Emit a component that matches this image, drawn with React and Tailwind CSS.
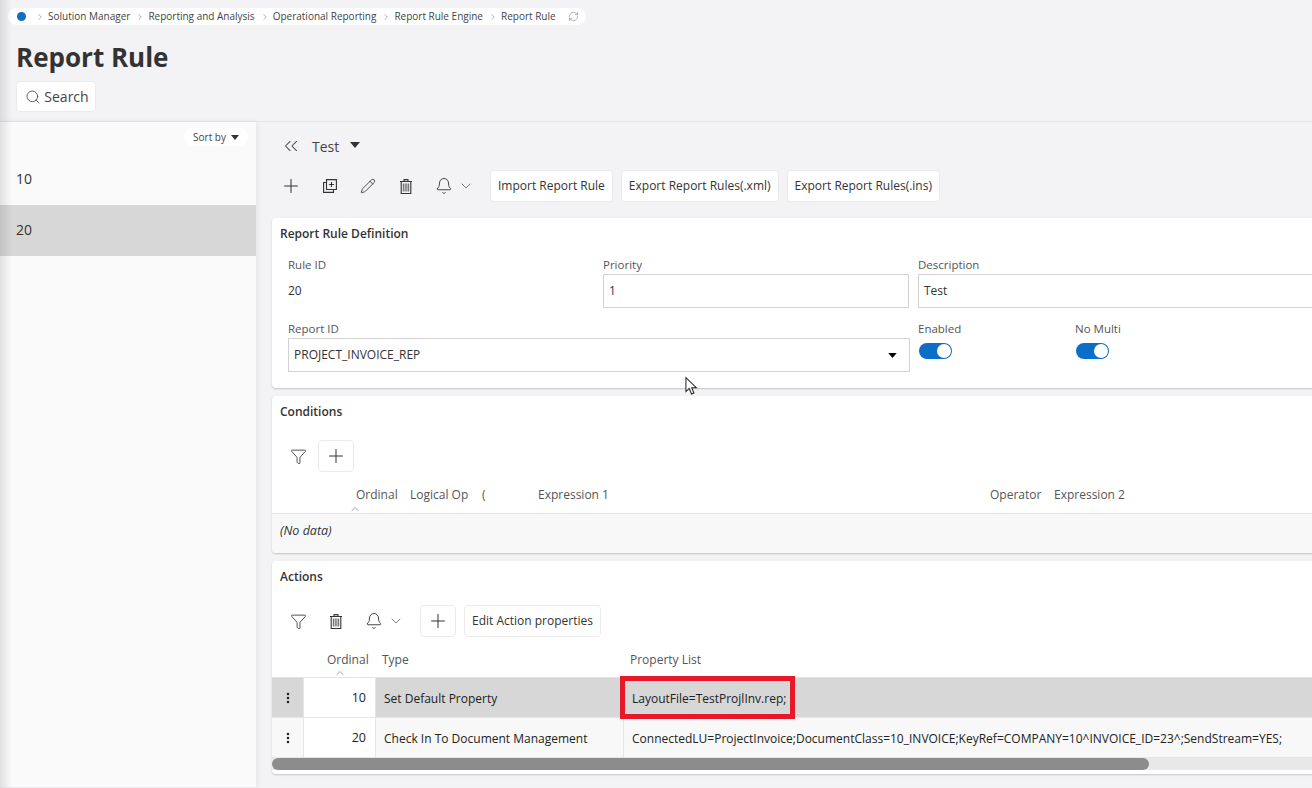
import { Search, RefreshCw, ChevronRight, ChevronDown, ChevronUp, ChevronsLeft, Plus, Pencil, Bell, Funnel, EllipsisVertical } from "lucide-react";

const crumbs = ["Solution Manager", "Reporting and Analysis", "Operational Reporting", "Report Rule Engine", "Report Rule"];

const Caret = ({ className }) => (
  <svg viewBox="0 0 10 6" className={className}>
    <path d="M0 0h10L5 6z" fill="currentColor" />
  </svg>
);

const Trash = () => (
  <svg viewBox="0 0 12 15" className="w-[12px] h-[15px] text-[#333]" fill="none" stroke="currentColor" strokeWidth="1.1">
    <path d="M0 2.5h12M4 2.5V.6h4v1.9" />
    <path d="M1.2 2.5h9.6v12H1.2z" />
    <path d="M3.4 4.5v8M5.2 4.5v8M6.9 4.5v8M8.6 4.5v8" stroke="#777" strokeWidth="1.2" />
  </svg>
);

const Duplicate = () => (
  <svg viewBox="0 0 14 14" className="w-[14px] h-[14px] text-[#333]" fill="none" stroke="currentColor" strokeWidth="1.1">
    <path d="M3.5.6h9.9v9.9H3.5z" />
    <path d="M3.5 3.5H.6v9.9h9.9v-2.9" />
    <path d="M8.45 3v5M5.95 5.5h5" />
  </svg>
);

const Cursor = () => (
  <svg viewBox="0 0 14 20" className="absolute left-[685px] top-[376px] w-[13px] h-[20px]">
    <path d="M1 1v15l3.6-3.4 2.4 6 2.6-1-2.4-5.8h5z" fill="#fff" stroke="#222" strokeWidth="1.1" />
  </svg>
);

const Toggle = () => (
  <div className="w-[33px] h-[16px] rounded-full bg-[#0b6fc9] flex items-center justify-end pr-[1px]">
    <div className="w-[14px] h-[14px] rounded-full bg-white" />
  </div>
);

const Field = ({ label, children, className }) => (
  <div className={className}>
    <div className="text-[11.5px] leading-[16px] text-[#555] -mt-[1px] mb-[1px]">{label}</div>
    {children}
  </div>
);

const BellMenu = () => (
  <div className="flex items-center gap-[5px]">
    <Bell className="w-[18px] h-[18px] text-[#333]" strokeWidth={1.2} />
    <ChevronDown className="w-[16px] h-[16px] text-[#555]" strokeWidth={1.1} />
  </div>
);

const Btn = ({ children, className = "" }) => (
  <button className={`h-[32px] px-[7px] bg-white rounded-[4px] border border-[#ebebeb] text-[12px] text-[#333] whitespace-nowrap ${className}`}>
    {children}
  </button>
);

const PlusBtn = ({ className = "" }) => (
  <div className={`w-[36px] h-[32px] border border-[#ebebeb] rounded-[4px] flex items-center justify-center ${className}`}>
    <Plus className="w-[22px] h-[22px] text-[#333]" strokeWidth={1.1} />
  </div>
);

const ActionRow = ({ num, type, selected, children }) => (
  <div className={`flex h-[40px] border-b border-[#e6e6e6] text-[12px] text-[#222] ${selected ? "bg-[#d7d7d7]" : "bg-[#f8f8f8]"}`}>
    <div className="w-[32px] flex items-center justify-center border-r border-[#e6e6e6]">
      <EllipsisVertical className="w-[14px] h-[14px] text-[#222]" strokeWidth={2.4} />
    </div>
    <div className="w-[72px] bg-white flex items-center justify-end pt-[2px] pr-[9px] border-r border-[#e6e6e6] text-[12.5px]">{num}</div>
    <div className="w-[248px] flex items-center pt-[2px] pl-[8px] border-r border-[#e6e6e6]">{type}</div>
    <div className="flex-1 flex items-center pt-[2px] pl-[8px] whitespace-nowrap">{children}</div>
  </div>
);

export default function App() {
  return (
    <div className="relative w-[1312px] h-[788px] overflow-hidden bg-[#f3f2f5] font-['Open_Sans',sans-serif]">
      <div className="h-[122px] border-b border-[#e3e3e3] pt-[8px] pl-[8px]">
        <div className="w-[578px] h-[17px] bg-white rounded-full flex items-center pl-[9px] text-[10px] text-[#444] whitespace-nowrap">
          <div className="w-[9px] h-[9px] shrink-0 rounded-full bg-[#0b6fc9] mr-[9px]" />
          {crumbs.map((c) => (
            <div key={c} className="flex items-center">
              <ChevronRight className="w-[10px] h-[10px] shrink-0 text-[#666] mr-[3px]" strokeWidth={1.2} />
              <span className="mr-[5px]">{c}</span>
            </div>
          ))}
          <RefreshCw className="w-[11px] h-[11px] shrink-0 text-[#777] ml-[7px]" strokeWidth={1.2} />
        </div>
        <h1 className="ml-[8px] mt-[12px] text-[26px] leading-[40px] font-bold text-[#333]">Report Rule</h1>
        <button className="ml-[8px] mt-[4px] w-[80px] h-[31px] bg-white rounded-[4px] border border-[#ebebeb] flex items-center justify-center gap-[3px] pl-[2px] text-[14px] text-[#444]">
          <Search className="w-[16px] h-[16px]" strokeWidth={1.3} />
          Search
        </button>
      </div>

      <div className="flex h-[665px]">
        <div className="w-[256px] shrink-0 bg-[#fafafa] shadow-[2px_0_6px_rgba(0,0,0,0.05)]">
          <div className="h-[32px] flex justify-end items-start pt-[6px] pr-[8px]">
            <div className="h-[18px] px-[9px] bg-white rounded-full flex items-center gap-[5px] text-[10px] text-[#444]">
              Sort by
              <Caret className="w-[8px] h-[5px] text-[#333]" />
            </div>
          </div>
          <div className="h-[51px] flex items-center pb-[2px] pl-[16px] text-[14px] text-[#333]">10</div>
          <div className="h-[51px] bg-[#d7d7d7] flex items-center pb-[2px] pl-[16px] text-[14px] text-[#333]">20</div>
        </div>

        <div className="flex-1 pl-[16px] min-w-0">
          <div className="h-[48px] flex items-center pl-[8px]">
            <ChevronsLeft className="w-[22px] h-[22px] text-[#444]" strokeWidth={1.1} />
            <span className="ml-[10px] text-[14px] text-[#444]">Test</span>
            <Caret className="ml-[10px] mb-[3px] w-[12px] h-[6px] text-[#333]" />
          </div>
          <div className="h-[32px] flex items-center">
            <Plus className="ml-[8px] w-[22px] h-[22px] text-[#333]" strokeWidth={1.1} />
            <div className="ml-[21px]"><Duplicate /></div>
            <Pencil className="ml-[23px] w-[16px] h-[16px] text-[#333]" strokeWidth={1.3} />
            <div className="ml-[24px]"><Trash /></div>
            <div className="ml-[23px]"><BellMenu /></div>
            <Btn className="ml-[16px]">Import Report Rule</Btn>
            <Btn className="ml-[8px]">Export Report Rules(.xml)</Btn>
            <Btn className="ml-[8px]">Export Report Rules(.ins)</Btn>
          </div>

          {/* Definition card */}
          <div className="mt-[16px] w-[1060px] h-[170px] bg-white rounded-[4px] shadow-[0_1px_2px_rgba(0,0,0,0.2)] pl-[8px] pt-[8px]">
            <div className="text-[12px] leading-[16px] font-semibold text-[#333]">Report Rule Definition</div>
            <div className="flex pl-[8px] mt-[16px]">
              <Field label="Rule ID" className="w-[315px]">
                <div className="h-[34px] flex items-center text-[12px] text-[#333]">20</div>
              </Field>
              <Field label="Priority" className="w-[315px]">
                <div className="w-[306px] h-[34px] border border-[#d2d2d2] flex items-center pl-[5px] text-[12px] text-[#333]">1</div>
              </Field>
              <Field label="Description" className="flex-1">
                <div className="h-[34px] border border-[#d2d2d2] flex items-center pl-[5px] text-[12px] text-[#333]">Test</div>
              </Field>
            </div>
            <div className="flex pl-[8px] mt-[14px]">
              <Field label="Report ID" className="w-[630px]">
                <div className="w-[622px] h-[34px] border border-[#d2d2d2] flex items-center justify-between pl-[5px] pr-[12px] text-[12px] text-[#333]">
                  PROJECT_INVOICE_REP
                  <Caret className="w-[9px] h-[5px] text-black" />
                </div>
              </Field>
              <Field label="Enabled" className="w-[157px]">
                <div className="mt-[6px] ml-[1px]"><Toggle /></div>
              </Field>
              <Field label="No Multi">
                <div className="mt-[6px] ml-[1px]"><Toggle /></div>
              </Field>
            </div>
          </div>

          {/* Conditions card */}
          <div className="mt-[8px] w-[1060px] h-[157px] bg-white rounded-[4px] shadow-[0_1px_2px_rgba(0,0,0,0.2)]">
            <div className="pl-[8px] pt-[8px] text-[12px] leading-[16px] font-semibold text-[#333]">Conditions</div>
            <div className="flex items-center h-[32px] mt-[20px] pl-[18px]">
              <Funnel className="w-[17px] h-[17px] text-[#333]" strokeWidth={1.2} />
              <PlusBtn className="ml-[11px]" />
            </div>
            <div className="relative flex h-[42px] items-end pb-[9px] border-b border-[#e3e3e3] text-[12px] text-[#555]">
              <span className="ml-[84px] w-[54px]">Ordinal</span>
              <span className="w-[72px]">Logical Op</span>
              <span className="w-[56px]">(</span>
              <span className="w-[452px]">Expression 1</span>
              <span className="w-[64px]">Operator</span>
              <span>Expression 2</span>
              <ChevronUp className="absolute left-[77px] bottom-[-2px] w-[12px] h-[12px] text-[#666]" strokeWidth={1.2} />
            </div>
            <div className="h-[39px] bg-[#f8f8f8] rounded-b-[4px] flex items-center pb-[4px] pl-[8px] text-[12.5px] italic text-[#333]">(No data)</div>
          </div>

          {/* Actions card */}
          <div className="mt-[8px] w-[1060px] h-[213px] bg-white rounded-[4px] shadow-[0_1px_2px_rgba(0,0,0,0.2)] relative overflow-hidden">
            <div className="pl-[8px] pt-[8px] text-[12px] leading-[16px] font-semibold text-[#333]">Actions</div>
            <div className="flex items-center h-[32px] mt-[20px] pl-[18px]">
              <Funnel className="w-[17px] h-[17px] text-[#333]" strokeWidth={1.2} />
              <div className="ml-[23px]"><Trash /></div>
              <div className="ml-[23px]"><BellMenu /></div>
              <PlusBtn className="ml-[16px]" />
              <Btn className="ml-[8px]">Edit Action properties</Btn>
            </div>
            <div className="relative flex h-[41px] items-end pb-[8px] border-b border-[#e3e3e3] text-[12px] text-[#555]">
              <span className="ml-[55px] w-[55px]">Ordinal</span>
              <span className="w-[248px]">Type</span>
              <span>Property List</span>
              <ChevronUp className="absolute left-[62px] bottom-[-2px] w-[12px] h-[12px] text-[#666]" strokeWidth={1.2} />
            </div>
            <ActionRow num="10" type="Set Default Property" selected>LayoutFile=TestProjlInv.rep;</ActionRow>
            <ActionRow num="20" type="Check In To Document Management">
              ConnectedLU=ProjectInvoice;DocumentClass=10_INVOICE;KeyRef=COMPANY=10^INVOICE_ID=23^;SendStream=YES;
            </ActionRow>
            <div className="h-[12px] bg-[#e8e8e8]">
              <div className="w-[877px] h-[12px] rounded-full bg-[#8c8c8c]" />
            </div>
          </div>
        </div>
      </div>

      {/* soft edge on the left of the page */}
      <div className="absolute left-0 top-0 w-[12px] h-[788px] bg-gradient-to-r from-black/10 to-transparent" />
      {/* red highlight drawn on the screenshot */}
      <div className="absolute left-[620px] top-[676px] w-[175px] h-[43px] border-[5px] border-[#e6192b]" />
      <Cursor />
    </div>
  );
}
